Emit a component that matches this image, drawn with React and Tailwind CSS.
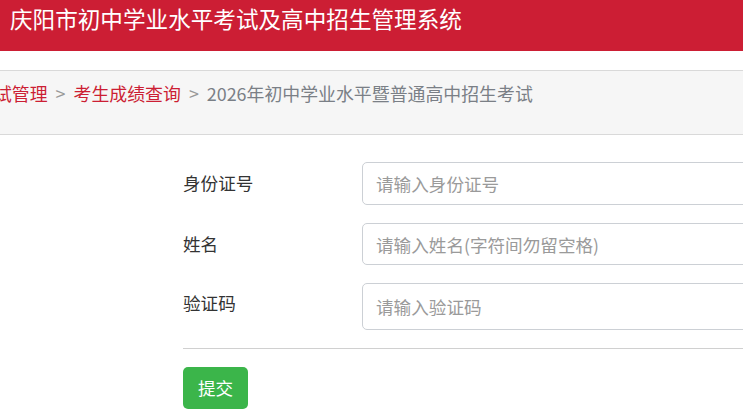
import React from 'react';

const font = { fontFamily: '"Microsoft YaHei", "Noto Sans CJK SC", "Liberation Sans", sans-serif' };

function Field({ label, placeholder, height, labelOffset }) {
    return (
        <div className="flex items-center">
            <label className={`w-[179px] shrink-0 text-[17.6px] text-[#333] ${labelOffset}`}>{label}</label>
            <input
                type="text"
                placeholder={placeholder}
                className={`w-[420px] ${height} shrink-0 rounded-[5px] border border-[#ccd0d5] bg-white px-[13px] text-[17.6px] text-[#333] placeholder:text-[#9a9a9a] outline-none`}
            />
        </div>
    );
}

export default function App() {
    return (
        <div className="w-[743px] h-[417px] overflow-hidden bg-white" style={font}>
            <header className="h-[51px] bg-[#cc1e34] pl-[10px] pt-[4px]">
                <h1 className="text-[22.6px] leading-[30px] text-white font-normal whitespace-nowrap">
                    庆阳市初中学业水平考试及高中招生管理系统
                </h1>
            </header>

            <div className="mt-[19px] h-[65px] border-y border-[#d9d9d9] bg-[#f6f6f6] pt-[9px]">
                <nav className="flex items-center whitespace-nowrap text-[17.9px] leading-[26px]">
                    <span className="-ml-[24px] text-[#cc1e34]">考试管理</span>
                    <span className="mx-[8px] text-[#999]">&gt;</span>
                    <span className="text-[#cc1e34]">考生成绩查询</span>
                    <span className="mx-[8px] text-[#999]">&gt;</span>
                    <span className="text-[#7a7f86]">2026年初中学业水平暨普通高中招生考试</span>
                </nav>
            </div>

            <form className="pl-[183px] pt-[27px]">
                <div className="flex flex-col gap-[18px]">
                    <Field label="身份证号" placeholder="请输入身份证号" height="h-[43px]" labelOffset="" />
                    <Field label="姓名" placeholder="请输入姓名(字符间勿留空格)" height="h-[42px]" labelOffset="" />
                    <Field label="验证码" placeholder="请输入验证码" height="h-[47px]" labelOffset="-mt-[7px]" />
                </div>
                <div className="mt-[18px] w-[600px] border-t border-[#d0d0d0]"></div>
                <button
                    type="button"
                    className="mt-[18px] h-[42px] w-[65px] rounded-[5px] bg-[#3bb54a] text-[17.6px] text-white"
                >
                    提交
                </button>
            </form>
        </div>
    );
}
